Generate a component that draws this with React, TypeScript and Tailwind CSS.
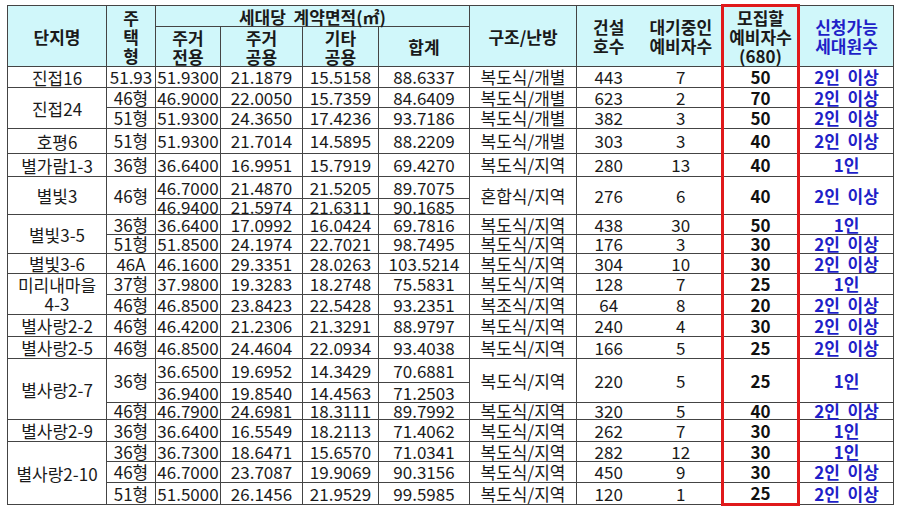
import React from "react";

type Rest = { s: string; n: string; w: string; m: string; p: string; rs?: number };
type Row = {
  h: string;
  name?: { t: React.ReactNode; rs?: number };
  type?: { t: string; rs?: number };
  v: [string, string, string, string];
  rest?: Rest;
};

const rows: Row[] = [
  { h: "h-[21px]", name: { t: "진접16" }, type: { t: "51.93" }, v: ["51.9300", "21.1879", "15.5158", "88.6337"], rest: { s: "복도식/개별", n: "443", w: "7", m: "50", p: "2인 이상" } },
  { h: "h-[20px]", name: { t: "진접24", rs: 2 }, type: { t: "46형" }, v: ["46.9000", "22.0050", "15.7359", "84.6409"], rest: { s: "복도식/개별", n: "623", w: "2", m: "70", p: "2인 이상" } },
  { h: "h-[21px]", type: { t: "51형" }, v: ["51.9300", "24.3650", "17.4236", "93.7186"], rest: { s: "복도식/개별", n: "382", w: "3", m: "50", p: "2인 이상" } },
  { h: "h-[25px]", name: { t: "호평6" }, type: { t: "51형" }, v: ["51.9300", "21.7014", "14.5895", "88.2209"], rest: { s: "복도식/개별", n: "303", w: "3", m: "40", p: "2인 이상" } },
  { h: "h-[23px]", name: { t: "별가람1-3" }, type: { t: "36형" }, v: ["36.6400", "16.9951", "15.7919", "69.4270"], rest: { s: "복도식/지역", n: "280", w: "13", m: "40", p: "1인" } },
  { h: "h-[22px]", name: { t: "별빛3", rs: 2 }, type: { t: "46형", rs: 2 }, v: ["46.7000", "21.4870", "21.5205", "89.7075"], rest: { s: "혼합식/지역", n: "276", w: "6", m: "40", p: "2인 이상", rs: 2 } },
  { h: "h-[16px]", v: ["46.9400", "21.5974", "21.6311", "90.1685"] },
  { h: "h-[20px]", name: { t: "별빛3-5", rs: 2 }, type: { t: "36형" }, v: ["36.6400", "17.0992", "16.0424", "69.7816"], rest: { s: "복도식/지역", n: "438", w: "30", m: "50", p: "1인" } },
  { h: "h-[19px]", type: { t: "51형" }, v: ["51.8500", "24.1974", "22.7021", "98.7495"], rest: { s: "복도식/지역", n: "176", w: "3", m: "30", p: "2인 이상" } },
  { h: "h-[20px]", name: { t: "별빛3-6" }, type: { t: "46A" }, v: ["46.1600", "29.3351", "28.0263", "103.5214"], rest: { s: "복도식/지역", n: "304", w: "10", m: "30", p: "2인 이상" } },
  { h: "h-[21px]", name: { t: <>미리내마을<br />4-3</>, rs: 2 }, type: { t: "37형" }, v: ["37.9800", "19.3283", "18.2748", "75.5831"], rest: { s: "복도식/지역", n: "128", w: "7", m: "25", p: "1인" } },
  { h: "h-[20px]", type: { t: "46형" }, v: ["46.8500", "23.8423", "22.5428", "93.2351"], rest: { s: "복조식/지역", n: "64", w: "8", m: "20", p: "2인 이상" } },
  { h: "h-[22px]", name: { t: "별사랑2-2" }, type: { t: "46형" }, v: ["46.4200", "21.2306", "21.3291", "88.9797"], rest: { s: "복도식/지역", n: "240", w: "4", m: "30", p: "2인 이상" } },
  { h: "h-[22px]", name: { t: "별사랑2-5" }, type: { t: "46형" }, v: ["46.8500", "24.4604", "22.0934", "93.4038"], rest: { s: "복도식/지역", n: "166", w: "5", m: "25", p: "2인 이상" } },
  { h: "h-[24px]", name: { t: "별사랑2-7", rs: 3 }, type: { t: "36형", rs: 2 }, v: ["36.6500", "19.6952", "14.3429", "70.6881"], rest: { s: "복도식/지역", n: "220", w: "5", m: "25", p: "1인", rs: 2 } },
  { h: "h-[20px]", v: ["36.9400", "19.8540", "14.4563", "71.2503"] },
  { h: "h-[17px]", type: { t: "46형" }, v: ["46.7900", "24.6981", "18.3111", "89.7992"], rest: { s: "복도식/지역", n: "320", w: "5", m: "40", p: "2인 이상" } },
  { h: "h-[22px]", name: { t: "별사랑2-9" }, type: { t: "36형" }, v: ["36.6400", "16.5549", "18.2113", "71.4062"], rest: { s: "복도식/지역", n: "262", w: "7", m: "30", p: "1인" } },
  { h: "h-[20px]", name: { t: "별사랑2-10", rs: 3 }, type: { t: "36형" }, v: ["36.7300", "18.6471", "15.6570", "71.0341"], rest: { s: "복도식/지역", n: "282", w: "12", m: "30", p: "1인" } },
  { h: "h-[21px]", type: { t: "46형" }, v: ["46.7000", "23.7087", "19.9069", "90.3156"], rest: { s: "복도식/지역", n: "450", w: "9", m: "30", p: "2인 이상" } },
  { h: "h-[22px]", type: { t: "51형" }, v: ["51.5000", "26.1456", "21.9529", "99.5985"], rest: { s: "복도식/지역", n: "120", w: "1", m: "25", p: "2인 이상" } },
];

const td = "border border-[#444] p-0 text-center align-middle leading-[14px] whitespace-nowrap";
const th = "border border-[#444] p-0 text-center align-middle bg-[#d0f7fa] font-bold leading-[19px] whitespace-nowrap";
const red = "border-l-[3px] border-r-[3px] border-l-[#e0191b] border-r-[#e0191b]";

export default function App() {
  return (
    <div className="w-[900px] h-[509px] bg-white pl-[7px] pt-[4px] font-['Noto_Sans_CJK_KR','Noto_Sans',sans-serif] text-[17px] text-[#1a1a1a]">
      <table className="table-fixed border-collapse w-[886px]">
        <colgroup>
          <col className="w-[99px]" />
          <col className="w-[49px]" />
          <col className="w-[65px]" />
          <col className="w-[82px]" />
          <col className="w-[76px]" />
          <col className="w-[91px]" />
          <col className="w-[107px]" />
          <col className="w-[64px]" />
          <col className="w-[82px]" />
          <col className="w-[76px]" />
          <col className="w-[95px]" />
        </colgroup>
        <thead>
          <tr className="h-[21px]">
            <th rowSpan={2} className={th}>단지명</th>
            <th rowSpan={2} className={th}>주<br />택<br />형</th>
            <th colSpan={4} className={`${th} whitespace-pre`}>세대당  계약면적(㎡)</th>
            <th rowSpan={2} className={th}>구조/난방</th>
            <th rowSpan={2} className={`${th} border-r-0`}>건설<br />호수</th>
            <th rowSpan={2} className={`${th} border-l-0`}>대기중인<br />예비자수</th>
            <th rowSpan={2} className={`${th} ${red} border-t-[3px] border-t-[#e0191b]`}>모집할<br />예비자수<br />(680)</th>
            <th rowSpan={2} className={`${th} text-[#1f1fc8]`}>신청가능<br />세대원수</th>
          </tr>
          <tr className="h-[40px]">
            <th className={th}>주거<br />전용</th>
            <th className={th}>주거<br />공용</th>
            <th className={th}>기타<br />공용</th>
            <th className={th}>합계</th>
          </tr>
        </thead>
        <tbody>
          {rows.map((r, i) => {
            const last = i === rows.length - 1;
            return (
              <tr key={i} className={r.h}>
                {r.name && (
                  <td rowSpan={r.name.rs} className={`${td} leading-[19px]`}>{r.name.t}</td>
                )}
                {r.type && (
                  <td rowSpan={r.type.rs} className={td}>{r.type.t}</td>
                )}
                {r.v.map((x, j) => (
                  <td key={j} className={td}>{x}</td>
                ))}
                {r.rest && (
                  <>
                    <td rowSpan={r.rest.rs} className={td}>{r.rest.s}</td>
                    <td rowSpan={r.rest.rs} className={`${td} border-r-0`}>{r.rest.n}</td>
                    <td rowSpan={r.rest.rs} className={`${td} border-l-0`}>{r.rest.w}</td>
                    <td
                      rowSpan={r.rest.rs}
                      className={`${td} ${red} font-bold text-[#111] ${last ? "border-b-[3px] border-b-[#e0191b]" : ""}`}
                    >
                      {r.rest.m}
                    </td>
                    <td rowSpan={r.rest.rs} className={`${td} font-bold text-[#1f1fc8] whitespace-pre`}>{r.rest.p.replace(" ", "  ")}</td>
                  </>
                )}
              </tr>
            );
          })}
        </tbody>
      </table>
    </div>
  );
}
